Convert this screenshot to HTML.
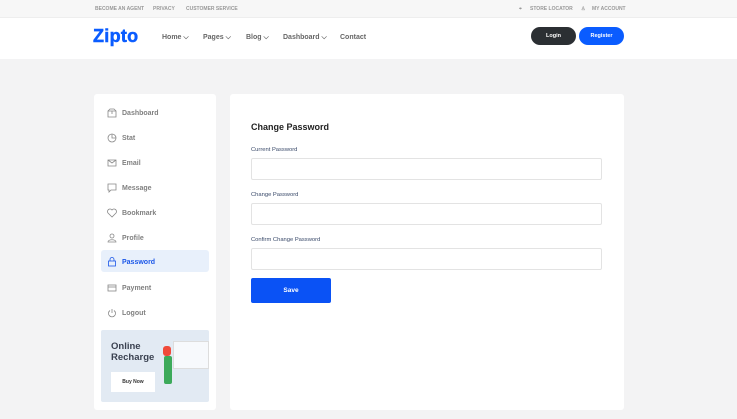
<!DOCTYPE html>
<html><head><meta charset="utf-8"><style>
*{margin:0;padding:0;box-sizing:border-box}
body{width:737px;height:419px;background:#f3f3f4;font-family:"Liberation Sans",sans-serif;position:relative;overflow:hidden}
.top{position:absolute;left:0;top:0;width:737px;height:18px;background:#f7f7f7;border-bottom:1px solid #eee;font-size:5px;color:#999;font-weight:bold}
.top span{position:absolute;top:6px}
.hdr{position:absolute;left:0;top:18px;width:737px;height:41px;background:#fff}
.logo{position:absolute;left:93px;top:8px;font-size:18px;font-weight:900;color:#0a5cff;letter-spacing:.3px;-webkit-text-stroke:.5px #0a5cff}
.nav{position:absolute;top:16px;font-size:7px;color:#666;font-weight:bold}
.btn{position:absolute;top:9px;height:18px;border-radius:9px;color:#fff;font-size:5.5px;font-weight:bold;text-align:center;line-height:18px}
.card{position:absolute;background:#fff;border-radius:3px}
.mi{position:absolute;left:7px;width:108px;height:22px;font-size:7px;font-weight:bold;color:#808080;line-height:22px;padding-left:21px}
.mi span{position:relative;top:2px}
.mi svg{position:absolute;left:6px;top:7px}
.mi.act{background:#e8f0fb;color:#1a56e8;border-radius:3px}
.lbl{position:absolute;left:21px;font-size:5.8px;color:#3a4a6a}
.inp{position:absolute;left:21px;width:351px;height:22px;border:1px solid #e3e3e3;border-radius:2px}
</style></head><body>
<div class="top"><span style="left:95px">BECOME AN AGENT</span><span style="left:153px">PRIVACY</span><span style="left:186px">CUSTOMER SERVICE</span>
<span style="left:519px">⌖</span><span style="left:530px">STORE LOCATOR</span><span style="left:581px">♙</span><span style="left:592px">MY ACCOUNT</span></div>
<div class="hdr"><div class="logo">Zipto</div>
<div class="nav" style="left:162px">Home ⌵</div><div class="nav" style="left:203px">Pages ⌵</div><div class="nav" style="left:246px">Blog ⌵</div><div class="nav" style="left:283px">Dashboard ⌵</div><div class="nav" style="left:340px">Contact</div>
<div class="btn" style="left:531px;width:45px;background:#2b2f33">Login</div><div class="btn" style="left:579px;width:45px;background:#0a5cff">Register</div></div>
<div class="card" style="left:94px;top:94px;width:122px;height:316px">
<div class="mi" style="top:7px"><svg width="10" height="10" fill="none" stroke="#888" stroke-width=".8"><path d="M1 3h8v6H1zM1 3l2-2h4l2 2M5 3v3"/></svg><span>Dashboard</span></div>
<div class="mi" style="top:32px"><svg width="10" height="10" fill="none" stroke="#888" stroke-width=".8"><circle cx="5" cy="5" r="4"/><path d="M5 1v4h4"/></svg><span>Stat</span></div>
<div class="mi" style="top:57px"><svg width="10" height="10" fill="none" stroke="#888" stroke-width=".8"><path d="M1 2h8v6H1zM1 2l4 3 4-3"/></svg><span>Email</span></div>
<div class="mi" style="top:82px"><svg width="10" height="10" fill="none" stroke="#888" stroke-width=".8"><path d="M1 1h8v6H4L2 9V7H1z"/></svg><span>Message</span></div>
<div class="mi" style="top:107px"><svg width="10" height="10" fill="none" stroke="#888" stroke-width=".8"><path d="M5 9L1 5a2.2 2.2 0 014-3 2.2 2.2 0 014 3z"/></svg><span>Bookmark</span></div>
<div class="mi" style="top:132px"><svg width="10" height="10" fill="none" stroke="#888" stroke-width=".8"><circle cx="5" cy="3" r="2"/><path d="M1 9c0-3 8-3 8 0z"/></svg><span>Profile</span></div>
<div class="mi act" style="top:156px"><svg width="10" height="10" fill="none" stroke="#1a56e8" stroke-width=".8"><rect x="1.5" y="4" width="7" height="5"/><path d="M3 4V2.5a2 2 0 014 0V4"/></svg><span>Password</span></div>
<div class="mi" style="top:182px"><svg width="10" height="10" fill="none" stroke="#888" stroke-width=".8"><rect x="1" y="2" width="8" height="6"/><path d="M1 4h8"/></svg><span>Payment</span></div>
<div class="mi" style="top:207px"><svg width="10" height="10" fill="none" stroke="#888" stroke-width=".8"><path d="M3 2.5a3.5 3.5 0 104 0M5 1v4"/></svg><span>Logout</span></div>
<div style="position:absolute;left:7px;top:236px;width:108px;height:72px;background:#e2eaf3;border-radius:2px">
<div style="position:absolute;left:10px;top:11px;font-size:9.5px;font-weight:bold;color:#3a4150;line-height:11px">Online<br>Recharge</div>
<div style="position:absolute;left:10px;top:42px;width:44px;height:20px;background:#fff;font-size:5px;font-weight:bold;text-align:center;line-height:20px;color:#333">Buy Now</div>
<div style="position:absolute;left:72px;top:11px;width:36px;height:28px;background:#f7f9fc;border:1px solid #ddd"></div>
<div style="position:absolute;left:62px;top:16px;width:8px;height:10px;background:#f04a3a;border-radius:3px"></div>
<div style="position:absolute;left:63px;top:26px;width:8px;height:28px;background:#3caa5a;border-radius:2px"></div>
</div></div>
<div class="card" style="left:230px;top:94px;width:394px;height:316px">
<div style="position:absolute;left:21px;top:28px;font-size:9px;font-weight:bold;color:#222">Change Password</div>
<div class="lbl" style="top:53px">Current Password</div><div class="inp" style="top:64px"></div>
<div class="lbl" style="top:98px">Change Password</div><div class="inp" style="top:109px"></div>
<div class="lbl" style="top:143px">Confirm Change Password</div><div class="inp" style="top:154px"></div>
<div style="position:absolute;left:21px;top:184px;width:80px;height:25px;background:#0a52f5;border-radius:2px;color:#fff;font-size:6.5px;font-weight:bold;text-align:center;line-height:25px">Save</div>
</div>
</body></html>
